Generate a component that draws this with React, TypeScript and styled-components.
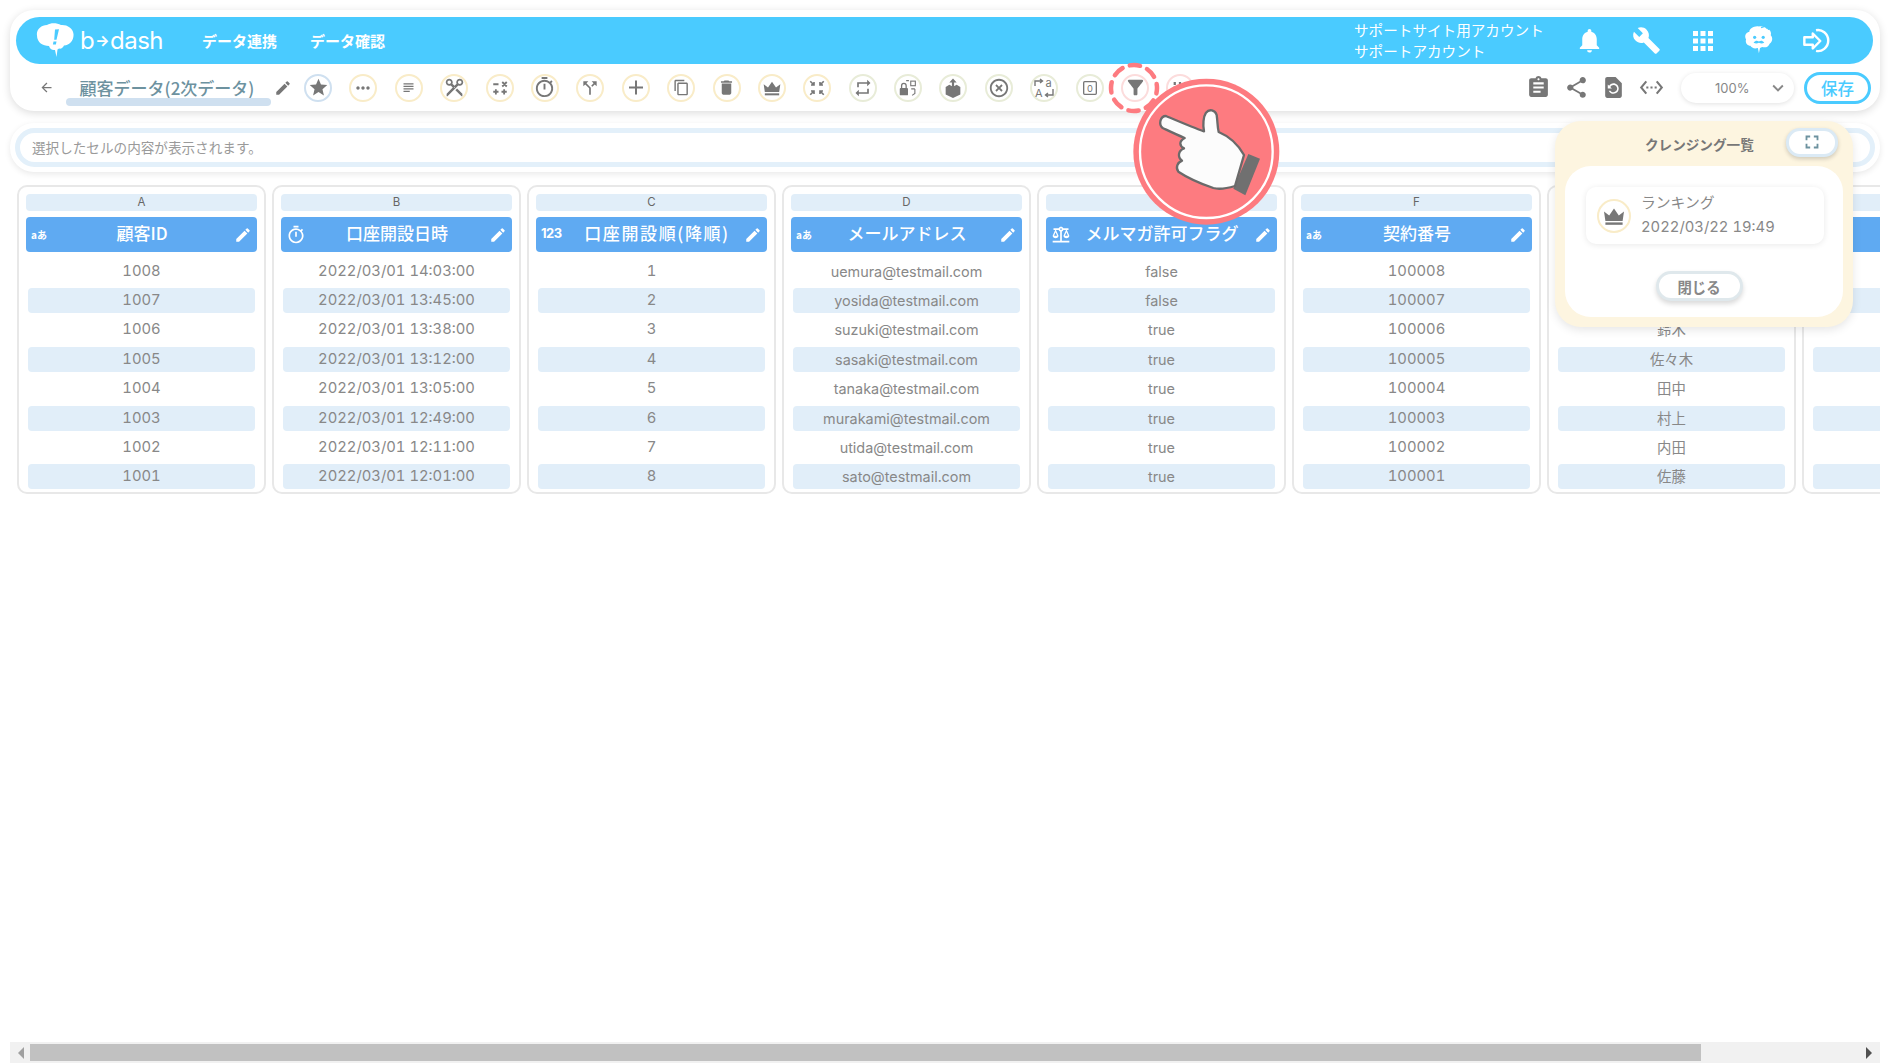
import React from "react";
import styled, { createGlobalStyle } from "styled-components";
import {
  MdStar, MdMoreHoriz, MdSubject, MdContentCut, MdOutlineTimer, MdCallSplit, MdAdd, MdContentCopy,
  MdDelete, MdRepeat, MdHighlightOff, MdFilterAlt, MdEdit, MdNotifications, MdBuild, MdApps,
  MdAssignment, MdShare, MdRestorePage, MdSettingsEthernet, MdExpandMore, MdArrowBack, MdFullscreen, MdBalance,
} from "react-icons/md";

const LATIN = `"Inter", "Noto Sans CJK JP", sans-serif`;

const GlobalStyle = createGlobalStyle`
  html, body { margin: 0; padding: 0; background: #fff; }
  body { font-family: "Noto Sans CJK JP", "Noto Sans", sans-serif; color: #888; }
  * { box-sizing: border-box; }
`;

const Page = styled.div`
  position: relative; width: 1890px; height: 1063px; overflow: hidden;
  display: flex; flex-direction: column; background: #fff;
`;
const TopCard = styled.header`
  margin: 10px 10px 0; height: 101px; padding: 7px 7px 0 6px; background: #fff;
  border-radius: 24px; box-shadow: 0 2px 9px rgba(0,0,0,.14);
`;
const NavBar = styled.div`
  height: 47px; background: #4acbff; border-radius: 24px; display: flex; align-items: center;
  color: #fff; padding-left: 19px;
`;
const Logo = styled.div`display: flex; align-items: center; width: 167px; gap: 5px;`;
const LogoText = styled.span`
  font-family: "Inter", sans-serif; font-size: 24px; font-weight: 400; letter-spacing: -.5px; line-height: 1;
  white-space: nowrap;
`;
const LogoArrow = styled.span`font-size: 15px; margin: 0 1px; vertical-align: 3px; font-weight: 700;`;
const NavLink = styled.a`
  font-size: 15px; font-weight: 700; margin-right: 33px; white-space: nowrap; width: 75px;
`;
const Account = styled.div`
  margin-left: auto; font-size: 14.6px; line-height: 21px; white-space: nowrap; width: 186px; margin-top: -1px;
`;
const NavIcons = styled.div`
  display: flex; align-items: center; margin: 0 41px 0 34px; gap: 27px; height: 100%;
`;
const NavIconBox = styled.span`
  width: 30px; display: flex; justify-content: center; align-items: center;
`;
const ToolRow = styled.div`height: 47px; display: flex; align-items: center; position: relative;`;
const BackBtn = styled.span`display: flex; margin-left: 23px; color: #777; width: 27px;`;
const TitleWrap = styled.div`position: relative; width: 205px; text-align: center; padding-right: 3px;`;
const Title = styled.h1`
  position: relative; margin: 0; font-size: 17px; font-weight: 500; color: #6d929f; white-space: nowrap; line-height: 26px;
`;
const Underline = styled.span`
  position: absolute; left: 0; right: 0; bottom: -5px; height: 8px; border-radius: 4px; background: #cfe0f0;
`;
const PencilBox = styled.span`display: flex; margin-left: 3px; color: #777; width: 30px;`;
const Tools = styled.div`display: flex; gap: 17.4px; margin-left: 0;`;
const TONES: Record<string, string> = { blue: "#cfe0f0", yellow: "#f9ecc8", green: "#e8ecd8", pink: "#fcdcdc" };
const ToolCircle = styled.span<{ $tone: string }>`
  width: 28px; height: 28px; border-radius: 50%; border: 2px solid ${p => TONES[p.$tone]};
  display: flex; align-items: center; justify-content: center; color: #777; background: #fff;
`;
const RightTools = styled.div`
  margin-left: auto; display: flex; align-items: center; gap: 0;
`;
const RightIcon = styled.span`width: 37.6px; display: flex; justify-content: center; color: #777;`;
const Zoom = styled.div`
  width: 113px; height: 30px; margin-left: 11px; margin-right: 10px; border-radius: 15px; background: #fff;
  box-shadow: 0 1px 5px rgba(0,0,0,.12); display: flex; align-items: center; padding-left: 34px;
  font-family: ${LATIN}; font-size: 13px; color: #888; justify-content: space-between; padding-right: 5px;
`;
const SaveBtn = styled.button`
  width: 67px; height: 32px; border: 3px solid #4acbff; border-radius: 16px; background: #fff;
  color: #4acbff; font: 500 16.5px "Noto Sans CJK JP", sans-serif; padding: 0; margin-right: 2px;
`;
const SearchCard = styled.div`
  margin: 12px 10px 0; height: 49px; padding: 5px; background: #fff; border-radius: 24px;
  box-shadow: 0 2px 6px rgba(0,0,0,.09);
`;
const SearchBox = styled.div`
  height: 39px; border: 5px solid #e3f0fa; border-radius: 20px; padding-left: 12px;
  font-size: 13.6px; line-height: 29px; color: #9a9a9a;
`;
const Table = styled.main`
  flex: 1; margin: 13px 10px 0; padding-left: 7px; display: flex; gap: 6px; overflow: hidden; align-items: flex-start;
`;
const Column = styled.section`
  flex: 0 0 249px; height: 309px; border: 2px solid #e8e8e8; border-radius: 10px; padding: 7px 7px 0;
`;
const Letter = styled.div`
  height: 17px; background: #e1eef9; border-radius: 4px; text-align: center; font-family: ${LATIN}; font-size: 11.5px; line-height: 16px; color: #666;
`;
const HeadCell = styled.div`
  margin-top: 6px; height: 35px; background: #5faaf2; border-radius: 4px; color: #fff; display: flex; align-items: center;
  position: relative; justify-content: center;
`;
const HeadTitle = styled.span<{ $spaced: boolean }>`
  font-size: 17px; font-weight: 500; white-space: nowrap; padding: 0 0 4px ${p => (p.$spaced ? "11px" : "1px")};
  letter-spacing: ${p => (p.$spaced ? "1.6px" : "0")};
`;
const TypeIcon = styled.span`
  position: absolute; left: 5px; top: 0; height: 100%; display: flex; align-items: center; font-size: 10px; font-weight: 700; white-space: nowrap;
`;
const NumType = styled.span`font-family: ${LATIN}; font-size: 13px; letter-spacing: -.5px; padding-bottom: 3px;`;
const EditIcon = styled.span`position: absolute; right: 5px; top: 0; height: 100%; display: flex; align-items: center;`;
const Rows = styled.div`margin-top: 6.6px; display: flex; flex-direction: column; gap: 4.4px;`;
const Row = styled.div<{ $band: boolean; $num: boolean }>`
  height: 25px; margin: 0 2px; border-radius: 4px; background: ${p => (p.$band ? "#e1eef9" : "transparent")};
  text-align: center; font-family: ${LATIN}; font-size: ${p => (p.$num ? "14.8px" : "14.4px")}; line-height: 25px; color: #888; white-space: nowrap;
  font-variant-numeric: tabular-nums;
`;
const ScrollTrack = styled.div`
  margin: 0 10px; height: 21px; background: #f1f1f1; display: flex; align-items: center; justify-content: space-between;
  padding: 0 8px; position: relative;
`;
const ScrollThumb = styled.div`
  position: absolute; left: 20px; width: 1671px; top: 2px; height: 17px; background: #c1c1c1;
`;
const Ring = styled.svg`position: absolute; left: 1107px; top: 61px;`;
const Pointer = styled.svg`position: absolute; left: 1100px; top: 60px;`;
const Popup = styled.aside`
  position: absolute; left: 1555px; top: 121px; width: 298px; height: 206px; background: #fdf5e0; border-radius: 26px;
  padding: 0 10px; box-shadow: 0 3px 10px rgba(0,0,0,.1);
`;
const PopupHead = styled.div`height: 45px; display: flex; align-items: center; position: relative;`;
const PopupTitle = styled.h2`
  margin: 0 0 0 80px; font-size: 13.6px; font-weight: 700; color: #777; white-space: nowrap; line-height: 1; padding-top: 3px;
`;
const ExpandBtn = styled.span`
  margin-left: auto; margin-right: 5px; width: 52px; height: 29px; margin-top: -3px; background: #fff; border: 3px solid #dbeaf5; border-radius: 14px;
  box-shadow: 0 2px 4px rgba(0,0,0,.18); display: flex; align-items: center; justify-content: center; color: #6d929f;
`;
const PopupBody = styled.div`
  height: 151px; background: #fff; border-radius: 26px; padding: 21px 19px 0 21px; display: flex; flex-direction: column;
`;
const HistoryItem = styled.div`
  height: 57px; border-radius: 10px; background: #fff; box-shadow: 0 1px 6px rgba(0,0,0,.09); display: flex; align-items: center;
  padding-left: 11px;
`;
const HistoryBadge = styled.span`
  width: 34px; height: 34px; border: 2px solid #f9ecc8; border-radius: 50%; display: flex; align-items: center; justify-content: center;
`;
const HistoryText = styled.div`
  margin: -2px 0 0 10px; font-family: ${LATIN}; font-size: 14.8px; line-height: 24px; color: #888; white-space: nowrap;
  font-variant-numeric: tabular-nums;
`;
const CloseBtn = styled.button`
  align-self: center; margin: 27px 12px 0 0; width: 87px; height: 30px; border: 3px solid #dfe8ec; border-radius: 15px; background: #fff;
  box-shadow: 0 3px 5px rgba(0,0,0,.15); font: 700 14.4px "Noto Sans CJK JP", sans-serif; color: #888; padding: 0;
`;

const Crown = ({ size = 20, color = "#777" }: { size?: number; color?: string }) => (
  <svg width={size} height={size} viewBox="0 0 24 24" fill={color}>
    <path d="M2 7.5l5.2 4L12 4.5l4.8 7 5.2-4-1.4 9.4H3.4z" /><rect x="3.4" y="18.4" width="17.2" height="2.4" />
  </svg>
);
const Calc = () => (
  <svg width="18" height="18" viewBox="0 0 24 24" stroke="#777" strokeWidth="2.4" fill="none">
    <path d="M3 7h7M15 4l6 6M21 4l-6 6M3 17h7M6.500 13.500v7M14 17h7M17.500 13.500v7" />
  </svg>
);
const Compress = () => (
  <svg width="18" height="18" viewBox="0 0 24 24" stroke="#777" strokeWidth="2.2" fill="none">
    <path d="M3 3l5 5M8 4v4H4M21 3l-5 5M16 4v4h4M3 21l5-5M8 20v-4H4M21 21l-5-5M16 20v-4h4" />
  </svg>
);
const LockSwap = () => (
  <svg width="22" height="22" viewBox="0 0 24 24" fill="#777">
    <rect x="3" y="12" width="9" height="8" rx="1" />
    <path d="M5 12V9.500a2.500 2.500 0 0 1 5 0V12" fill="none" stroke="#777" strokeWidth="1.400" />
    <rect x="15" y="4.500" width="5" height="5" fill="none" stroke="#777" strokeWidth="1.200" />
    <path d="M15.500 13h4M19.500 13v5l-3 2M10 4h3" fill="none" stroke="#777" strokeWidth="1.200" />
  </svg>
);
const BoxOut = () => (
  <svg width="22" height="22" viewBox="0 0 24 24" fill="#777">
    <path d="M4 11l4-2.500 4 2 4-2 4 2.500v8l-8 4-8-4z" />
    <path d="M12 1.500l4 4.500h-2.800v5h-2.400V6H8z" />
  </svg>
);
const Translate = () => (
  <svg width="24" height="24" viewBox="0 0 24 24" fill="none" stroke="#777" strokeWidth="1.400">
    <text x="13.500" y="11" fontSize="11" fill="#777" stroke="none" fontFamily="Inter, sans-serif">a</text>
    <text x="3" y="21" fontSize="11" fill="#777" stroke="none" fontFamily="Inter, sans-serif">A</text>
    <path d="M3 10V5h7M8 3l2.500 2L8 7M21 13v6h-7M16 17l-2.500 2 2.500 2" />
  </svg>
);
const ZeroBox = () => (
  <svg width="16" height="16" viewBox="0 0 24 24" fill="none" stroke="#777" strokeWidth="2">
    <rect x="2.500" y="2.500" width="19" height="19" rx="1.500" />
    <text x="12" y="17.500" textAnchor="middle" fontSize="14" fill="#777" stroke="none" fontFamily="Inter, sans-serif">0</text>
  </svg>
);
const DotColumns = () => (
  <svg width="18" height="18" viewBox="0 0 24 24" fill="#777">
    {[5, 12, 19].map(x => [4, 10, 16].map(y => <rect key={`${x}-${y}`} x={x - 1.5} y={y} width="3" height="4" />))}
  </svg>
);
const Brain = () => (
  <svg width="34" height="39" viewBox="4 1 28 32">
    <path fill="#fff" d="M17 4c2-1 6 0 7 2 3 0 5 3 4 6 2 2 2 6-1 8-1 3-4 4-7 3l-2 1-1 5-1-5c-3 1-6 0-7-2-3 0-5-3-4-6-2-3 0-7 3-7 0-3 5-6 9-5z" />
    <circle cx="13" cy="14" r="1.500" fill="#4acbff" /><circle cx="21" cy="14" r="1.500" fill="#4acbff" />
    <path d="M12 19c2-2 3-2 5-1 2-1 3-1 5 1-2 1-3 1-5 0-2 1-3 1-5 0z" fill="#4acbff" />
    <path d="M19 5l6-2 1 4" fill="none" stroke="#4acbff" strokeWidth="1.200" />
  </svg>
);
const LoginIcon = () => (
  <svg width="32" height="32" viewBox="0 0 32 32" fill="none" stroke="#fff" strokeWidth="2.600">
    <path d="M15 4.500c6-1.500 13 3.500 13 11s-7 12.500-13 11" />
    <path d="M2.500 12h9V8l8 8-8 8v-4h-9z" strokeLinejoin="round" />
  </svg>
);
const CloudLogo = () => (
  <svg width="40" height="35" viewBox="0 0 40 35">
    <path fill="#fff" d="M12 2c4-2.500 10-2 14 0 6-.5 12 3 12.500 9 .5 6-3.500 11-9.500 11.500-1 2.500-3 3.500-5 3l-1.500 1-1 7.500-1.500-7c-3 .5-5-1-6-4-6 0-12-3.500-12-10.500C1 7 6 2 12 2z" />
    <path fill="#4acbff" d="M20 6.500l4-.3-2.500 10.500h-2.300zM18.500 18.500h3l-.6 3h-3z" />
  </svg>
);

const TOOLS: { tone: string; icon: React.ReactNode }[] = [
  { tone: "blue", icon: <MdStar size={21} /> },
  { tone: "yellow", icon: <MdMoreHoriz size={20} /> },
  { tone: "yellow", icon: <MdSubject size={15} /> },
  { tone: "yellow", icon: <MdContentCut size={21} style={{ transform: "rotate(90deg)" }} /> },
  { tone: "yellow", icon: <Calc /> },
  { tone: "yellow", icon: <MdOutlineTimer size={23} /> },
  { tone: "yellow", icon: <MdCallSplit size={20} /> },
  { tone: "yellow", icon: <MdAdd size={25} /> },
  { tone: "yellow", icon: <MdContentCopy size={17} /> },
  { tone: "yellow", icon: <MdDelete size={19} /> },
  { tone: "yellow", icon: <Crown /> },
  { tone: "yellow", icon: <Compress /> },
  { tone: "green", icon: <MdRepeat size={20} /> },
  { tone: "green", icon: <LockSwap /> },
  { tone: "green", icon: <BoxOut /> },
  { tone: "green", icon: <MdHighlightOff size={22} /> },
  { tone: "green", icon: <Translate /> },
  { tone: "green", icon: <ZeroBox /> },
  { tone: "pink", icon: <MdFilterAlt size={23} /> },
  { tone: "pink", icon: <DotColumns /> },
];

const AB = "aあ";
const COLUMNS: { letter: string; title: string; type: React.ReactNode; rows: string[] }[] = [
  { letter: "A", title: "顧客ID", type: AB, rows: ["1008", "1007", "1006", "1005", "1004", "1003", "1002", "1001"] },
  { letter: "B", title: "口座開設日時", type: <MdOutlineTimer size={20} />, rows: ["2022/03/01 14:03:00", "2022/03/01 13:45:00", "2022/03/01 13:38:00", "2022/03/01 13:12:00", "2022/03/01 13:05:00", "2022/03/01 12:49:00", "2022/03/01 12:11:00", "2022/03/01 12:01:00"] },
  { letter: "C", title: "口座開設順(降順)", type: <NumType>123</NumType>, rows: ["1", "2", "3", "4", "5", "6", "7", "8"] },
  { letter: "D", title: "メールアドレス", type: AB, rows: ["uemura@testmail.com", "yosida@testmail.com", "suzuki@testmail.com", "sasaki@testmail.com", "tanaka@testmail.com", "murakami@testmail.com", "utida@testmail.com", "sato@testmail.com"] },
  { letter: "E", title: "メルマガ許可フラグ", type: <MdBalance size={20} />, rows: ["false", "false", "true", "true", "true", "true", "true", "true"] },
  { letter: "F", title: "契約番号", type: AB, rows: ["100008", "100007", "100006", "100005", "100004", "100003", "100002", "100001"] },
  { letter: "G", title: "氏名", type: AB, rows: ["上村", "吉田", "鈴木", "佐々木", "田中", "村上", "内田", "佐藤"] },
  { letter: "H", title: "", type: AB, rows: ["", "", "", "", "", "", "", ""] },
];

export default function App() {
  return (
    <Page>
      <GlobalStyle />
      <TopCard>
        <NavBar>
          <Logo>
            <CloudLogo />
            <LogoText>b<LogoArrow>→</LogoArrow>dash</LogoText>
          </Logo>
          <NavLink>データ連携</NavLink>
          <NavLink>データ確認</NavLink>
          <Account>サポートサイト用アカウント<br />サポートアカウント</Account>
          <NavIcons>
            <NavIconBox><MdNotifications size={29} /></NavIconBox>
            <NavIconBox><MdBuild size={29} /></NavIconBox>
            <NavIconBox><MdApps size={32} /></NavIconBox>
            <NavIconBox><Brain /></NavIconBox>
            <NavIconBox><LoginIcon /></NavIconBox>
          </NavIcons>
        </NavBar>
        <ToolRow>
          <BackBtn><MdArrowBack size={15} /></BackBtn>
          <TitleWrap>
            <Title>顧客データ(2次データ)</Title>
            <Underline />
          </TitleWrap>
          <PencilBox><MdEdit size={18} /></PencilBox>
          <Tools>
            {TOOLS.map((t, i) => <ToolCircle key={i} $tone={t.tone}>{t.icon}</ToolCircle>)}
          </Tools>
          <RightTools>
            <RightIcon><MdAssignment size={25} /></RightIcon>
            <RightIcon><MdShare size={25} /></RightIcon>
            <RightIcon><MdRestorePage size={25} /></RightIcon>
            <RightIcon><MdSettingsEthernet size={25} /></RightIcon>
            <Zoom>100%<MdExpandMore size={22} /></Zoom>
            <SaveBtn>保存</SaveBtn>
          </RightTools>
        </ToolRow>
      </TopCard>
      <SearchCard>
        <SearchBox>選択したセルの内容が表示されます。</SearchBox>
      </SearchCard>
      <Table>
        {COLUMNS.map(c => (
          <Column key={c.letter}>
            <Letter>{c.letter}</Letter>
            <HeadCell>
              <TypeIcon>{c.type}</TypeIcon>
              <HeadTitle $spaced={c.letter === "C"}>{c.title}</HeadTitle>
              <EditIcon><MdEdit size={18} /></EditIcon>
            </HeadCell>
            <Rows>
              {c.rows.map((r, i) => <Row key={i} $band={i % 2 === 1} $num={/^[\d/: ]+$/.test(r)}>{r}</Row>)}
            </Rows>
          </Column>
        ))}
      </Table>
      <ScrollTrack>
        <ScrollThumb />
        <svg width="6" height="12" viewBox="0 0 6 12"><path d="M6 0v12L0 6z" fill="#a0a0a0" /></svg>
        <svg width="6" height="12" viewBox="0 0 6 12"><path d="M0 0v12l6-6z" fill="#505050" /></svg>
      </ScrollTrack>
      <Ring width="54" height="54" viewBox="0 0 54 54">
        <circle cx="27" cy="27" r="23" fill="none" stroke="#fd7b80" strokeWidth="4.500" strokeLinecap="round" strokeDasharray="10.500 7.560" strokeDashoffset="5" />
      </Ring>
      <Popup>
        <PopupHead>
          <PopupTitle>クレンジング一覧</PopupTitle>
          <ExpandBtn><MdFullscreen size={22} /></ExpandBtn>
        </PopupHead>
        <PopupBody>
          <HistoryItem>
            <HistoryBadge><Crown size={24} /></HistoryBadge>
            <HistoryText>ランキング<br />2022/03/22 19:49</HistoryText>
          </HistoryItem>
          <CloseBtn>閉じる</CloseBtn>
        </PopupBody>
      </Popup>
      <Pointer width="200" height="180" viewBox="0 0 600 540">
        <circle cx="319" cy="275" r="219" fill="#fd7b80" />
        <circle cx="319" cy="275" r="199" fill="none" stroke="#fff" strokeWidth="7" />
        <path d="M445 282L480 296 436 406 400 386z" fill="#707070" />
        <path d="M198 168C250 190 285 205 312 214C308 195 310 170 318 158C328 146 345 150 350 165C353 185 352 200 356 216C390 230 415 255 432 285L405 378C385 384 360 390 340 384C305 372 265 355 235 335C226 322 232 308 246 302C232 292 234 272 252 265C238 258 236 244 254 234C225 222 205 212 188 204C175 194 180 168 198 168z" fill="#fcfcfc" stroke="#6a6a6a" strokeWidth="7" strokeLinejoin="round" />
      </Pointer>
    </Page>
  );
}
